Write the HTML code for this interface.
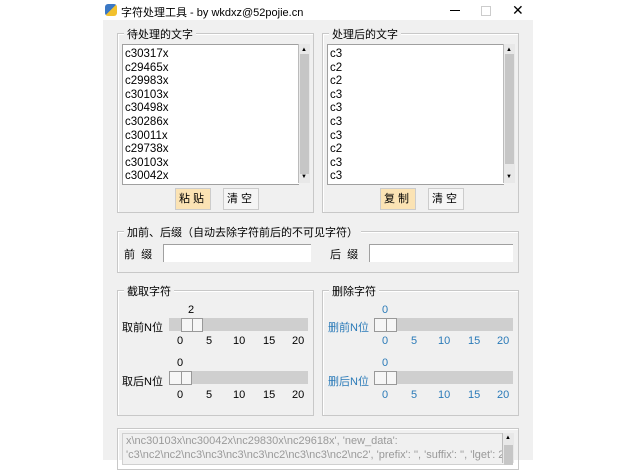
<!DOCTYPE html><html><head><meta charset="utf-8"><style>
body{margin:0;width:627px;height:460px;background:#fff;position:relative;overflow:hidden;font-family:"Liberation Sans","Noto Sans CJK SC",sans-serif;font-size:11px;color:#000}
.a{position:absolute}
.win{left:103px;top:20px;width:430px;height:440px;background:#f0f0f0}
.grp{position:absolute;border:1px solid #c8c8c8;box-shadow:inset 1px 1px 0 #fff}
.lg{position:absolute;top:-8px;left:6px;background:#f0f0f0;padding:0 3px;font-size:11px}
.lb{position:absolute;background:#fff;border:1px solid #a0a0a0;border-right:none}
.lb div{font-size:11.5px;line-height:13.6px;padding-left:2px}
.sb{position:absolute;width:11px;background:#e8e8e8;border-left:1px solid #bbb}
.btn{position:absolute;width:34px;height:20px;border:1px solid #ccc;background:#f5f5f5;text-align:center;line-height:20px;letter-spacing:3px;font-size:11px}
.inp{position:absolute;background:#fff;border-top:1px solid #a0a0a0;border-left:1px solid #a0a0a0;height:17px}
.tr{position:absolute;height:13px;background:#cfcfcf}
.h{position:absolute;height:12px;border:1px solid #999;background:#f6f6f6;top:0}
.h:after{content:"";position:absolute;left:50%;top:0;height:12px;border-left:1px solid #999}
.t{position:absolute;font-size:11px}
.blue{color:#2a7ab8}
</style></head><body>
<div class="a" style="left:105px;top:4px;width:12px;height:12px;background:linear-gradient(135deg,#3b78c4 50%,#f2c12e 50%);border-radius:3px"></div>
<div class="a" style="left:121px;top:4px;font-size:11px">字符处理工具 - by wkdxz@52pojie.cn</div>
<div class="a" style="left:450px;top:10px;width:10px;border-top:1px solid #000"></div>
<div class="a" style="left:481px;top:6px;width:8px;height:8px;border:1px solid #ccc"></div>
<div class="a" style="left:512px;top:2px;font-size:14px">✕</div>
<div class="a win"></div>

<div class="grp" style="left:117px;top:33px;width:195px;height:178px"><span class="lg">待处理的文字</span></div>
<div class="lb" style="left:122px;top:44px;width:176px;height:139px"><div style="height:3px"></div>
<div>c30317x</div><div>c29465x</div><div>c29983x</div><div>c30103x</div><div>c30498x</div><div>c30286x</div><div>c30011x</div><div>c29738x</div><div>c30103x</div><div>c30042x</div></div>
<div class="sb" style="left:298px;top:44px;height:139px"><div class="a" style="left:1px;top:10px;width:9px;height:120px;background:#c6c6c6"></div><div class="a" style="left:2px;top:3px;font-size:6px">▲</div><div class="a" style="left:2px;top:130px;font-size:6px">▼</div></div>
<div class="btn" style="left:175px;top:188px;background:#fbe3b4">粘贴</div>
<div class="btn" style="left:223px;top:188px">清空</div>

<div class="grp" style="left:322px;top:33px;width:195px;height:178px"><span class="lg">处理后的文字</span></div>
<div class="lb" style="left:327px;top:44px;width:176px;height:139px"><div style="height:3px"></div>
<div>c3</div><div>c2</div><div>c2</div><div>c3</div><div>c3</div><div>c3</div><div>c3</div><div>c2</div><div>c3</div><div>c3</div></div>
<div class="sb" style="left:503px;top:44px;height:139px"><div class="a" style="left:1px;top:10px;width:9px;height:110px;background:#c6c6c6"></div><div class="a" style="left:2px;top:3px;font-size:6px">▲</div><div class="a" style="left:2px;top:130px;font-size:6px">▼</div></div>
<div class="btn" style="left:380px;top:188px;background:#fbe3b4">复制</div>
<div class="btn" style="left:428px;top:188px">清空</div>

<div class="grp" style="left:117px;top:231px;width:400px;height:40px"><span class="lg">加前、后缀（自动去除字符前后的不可见字符）</span></div>
<div class="t" style="left:124px;top:246px">前&nbsp;&nbsp;缀</div>
<div class="inp" style="left:163px;top:244px;width:147px"></div>
<div class="t" style="left:330px;top:246px">后&nbsp;&nbsp;缀</div>
<div class="inp" style="left:369px;top:244px;width:143px"></div>

<div class="grp" style="left:117px;top:290px;width:195px;height:124px"><span class="lg">截取字符</span></div>
<div class="grp" style="left:322px;top:290px;width:195px;height:124px"><span class="lg">删除字符</span></div>

<div class="t" style="left:188px;top:304px">2</div>
<div class="t" style="left:122px;top:319px">取前N位</div>
<div class="tr" style="left:169px;top:318px;width:139px"><div class="h" style="left:12px;width:20px"></div></div>
<div class="t" style="left:177px;top:335px"><span style="position:absolute;left:0">0</span><span style="position:absolute;left:29px">5</span><span style="position:absolute;left:56px">10</span><span style="position:absolute;left:86px">15</span><span style="position:absolute;left:115px">20</span></div>
<div class="t" style="left:177px;top:357px">0</div>
<div class="t" style="left:122px;top:373px">取后N位</div>
<div class="tr" style="left:169px;top:371px;width:139px"><div class="h" style="left:0;width:21px"></div></div>
<div class="t" style="left:177px;top:389px"><span style="position:absolute;left:0">0</span><span style="position:absolute;left:29px">5</span><span style="position:absolute;left:56px">10</span><span style="position:absolute;left:86px">15</span><span style="position:absolute;left:115px">20</span></div>

<div class="t blue" style="left:382px;top:304px">0</div>
<div class="t blue" style="left:328px;top:319px">删前N位</div>
<div class="tr" style="left:374px;top:318px;width:139px"><div class="h" style="left:0;width:21px"></div></div>
<div class="t blue" style="left:382px;top:335px"><span style="position:absolute;left:0">0</span><span style="position:absolute;left:29px">5</span><span style="position:absolute;left:56px">10</span><span style="position:absolute;left:86px">15</span><span style="position:absolute;left:115px">20</span></div>
<div class="t blue" style="left:382px;top:357px">0</div>
<div class="t blue" style="left:328px;top:373px">删后N位</div>
<div class="tr" style="left:374px;top:371px;width:139px"><div class="h" style="left:0;width:21px"></div></div>
<div class="t blue" style="left:382px;top:389px"><span style="position:absolute;left:0">0</span><span style="position:absolute;left:29px">5</span><span style="position:absolute;left:56px">10</span><span style="position:absolute;left:86px">15</span><span style="position:absolute;left:115px">20</span></div>

<div class="grp" style="left:117px;top:428px;width:400px;height:40px"></div>
<div class="a" style="left:122px;top:433px;width:380px;height:30px;background:#f0f0f0;border:1px solid #d0d0d0;color:#999;font-size:11px;line-height:14px;padding-left:3px;white-space:nowrap;overflow:hidden">x\nc30103x\nc30042x\nc29830x\nc29618x', 'new_data':<br>'c3\nc2\nc2\nc3\nc3\nc3\nc3\nc2\nc3\nc3\nc2\nc2', 'prefix': '', 'suffix': '', 'lget': 2.0,</div>
<div class="sb" style="left:502px;top:433px;height:30px"><div class="a" style="left:2px;top:2px;font-size:6px">▲</div><div class="a" style="left:1px;top:12px;width:9px;height:20px;background:#c6c6c6"></div></div>
</body></html>
